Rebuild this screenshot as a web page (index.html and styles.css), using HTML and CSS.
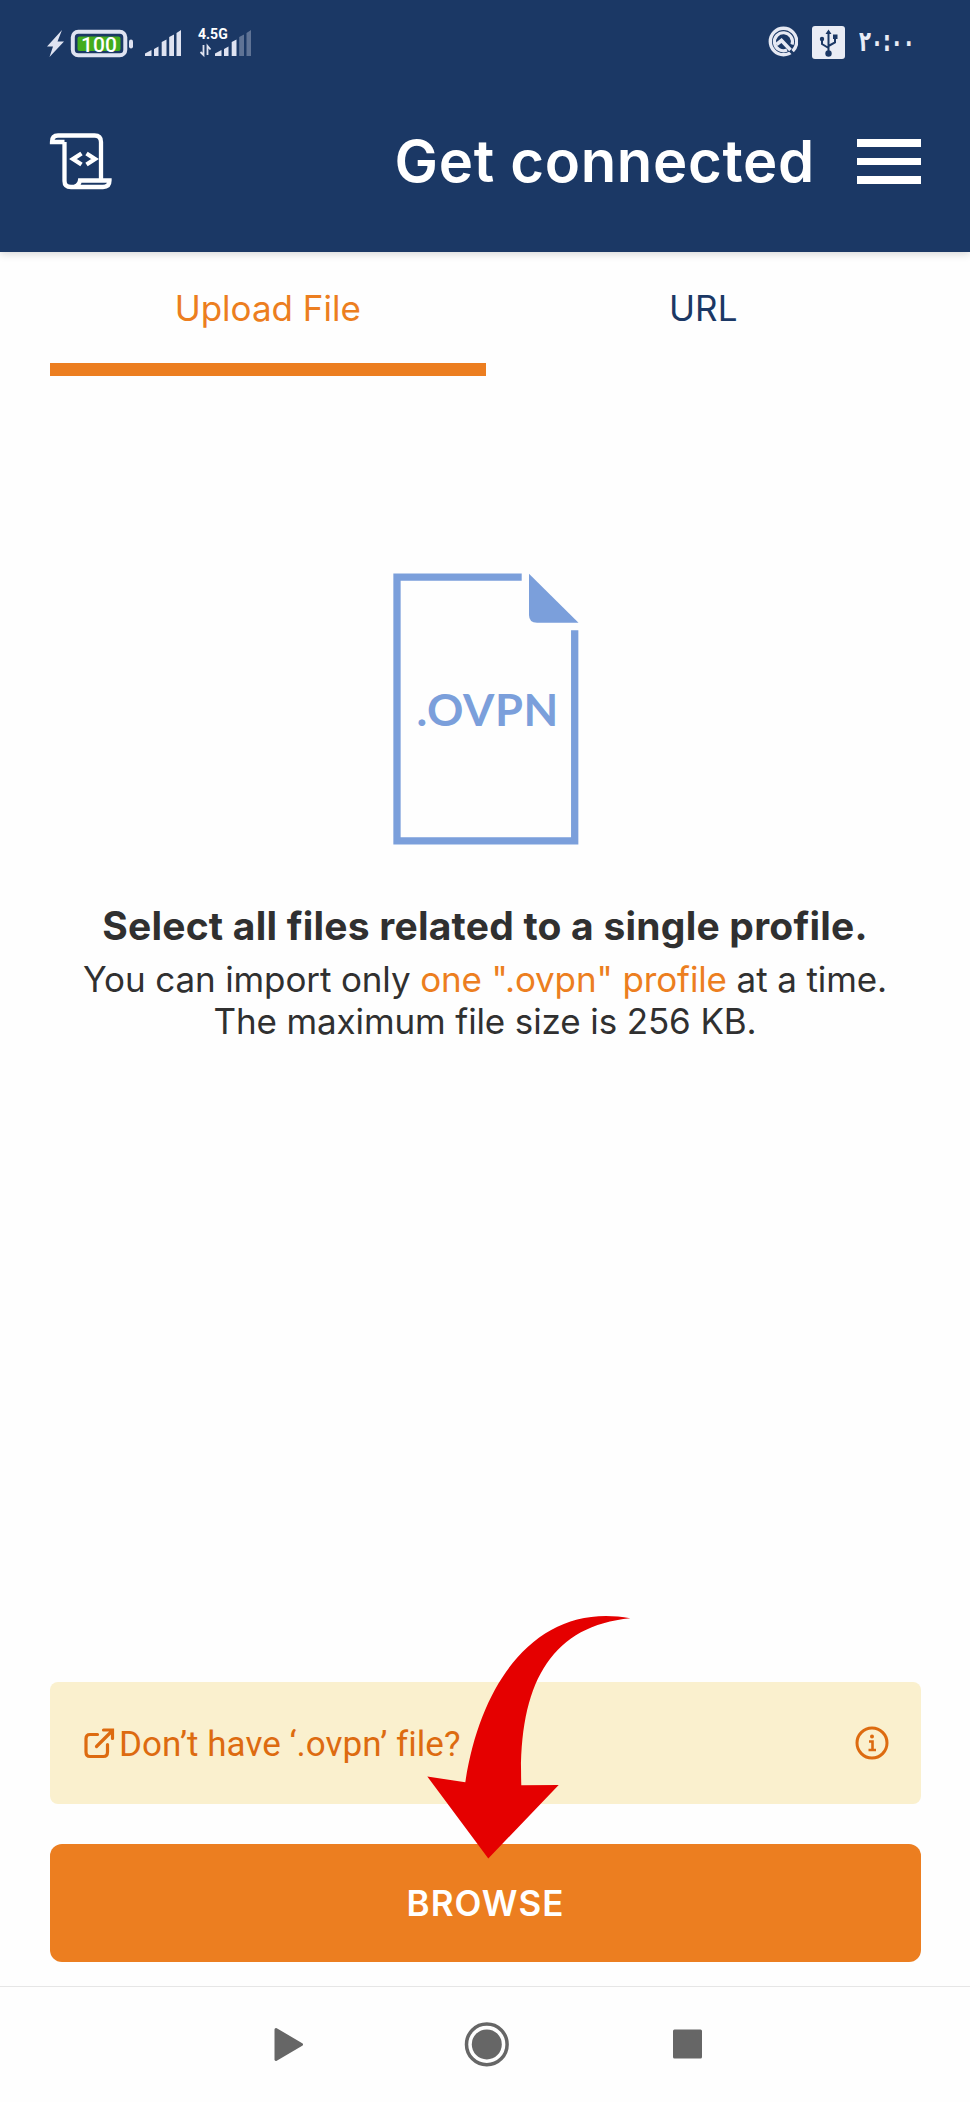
FILE: index.html
```html
<!DOCTYPE html>
<html lang="en">
<head>
<meta charset="utf-8">
<title>Get connected</title>
<link rel="stylesheet" href="styles.css">
</head>
<body>
<div class="screen">
  <header class="header">
    <div class="status">
      <svg class="status-left" width="210" height="40" viewBox="44 22 210 40">
        <path d="M62 30 47 46.500H53L49.500 57 64 41.500H57.500Z" fill="#dfe3f1"/>
        <rect x="72.800" y="31.800" width="52.500" height="23.500" rx="5.500" fill="none" stroke="#dfe3f1" stroke-width="4"/>
        <rect x="77.500" y="36.500" width="43" height="14.500" rx="2" fill="#43ac1c"/>
        <rect x="129" y="39.500" width="4" height="9" rx="2" fill="#dfe3f1"/>
        <text class="battery-text" x="99" y="51.500" text-anchor="middle">100</text>
        <g fill="#dfe3f1">
          <path d="M145 56V53.500L151.500 50V56ZM154 56V49L158.500 46.500V56ZM161.700 56V42L166.500 39.500V56ZM169.200 56V37L174 34.500V56ZM176.500 56V33L181 30V56Z"/>
          <path d="M215 56V53.500L221.500 50V56ZM224 56V49L228.500 46.500V56ZM231.700 56V42L236.500 39.500V56Z"/>
          <path d="M239.200 56V37L244 34.500V56ZM246.500 56V33L251 30V56Z" opacity=".35"/>
        </g>
        <path d="M203.500 45V55L200.500 52M207.500 55V46L210.500 49.500" fill="none" stroke="#dfe3f1" stroke-width="1.800"/>
        <text class="network-text" x="198" y="39">4.5G</text>
      </svg>
      <div class="status-right">
        <svg width="30" height="31" viewBox="768 27 30 31">
          <circle cx="783.500" cy="42.500" r="13.200" fill="none" stroke="#e6e9f3" stroke-width="3.400"/>
          <path d="M787 51A9 9 0 1 1 792 45.500" fill="none" stroke="#e6e9f3" stroke-width="3.200"/>
          <path d="M789 50.500 796 57.500" stroke="#1b3865" stroke-width="3"/>
          <path d="M776.500 45.500 781.500 41.500 790.500 51" fill="none" stroke="#e6e9f3" stroke-width="3.600"/>
        </svg>
        <svg width="33" height="34" viewBox="812 26 33 34">
          <rect x="812" y="26" width="33" height="33" rx="3" fill="#e9ecf5"/>
          <g fill="none" stroke="#1b3865" stroke-width="2"><path d="M828.500 52V32M828.500 48 822 44V39M828.500 46 835 42.500V37"/></g>
          <circle cx="828.500" cy="53.500" r="3.200" fill="#1b3865"/><circle cx="822" cy="39" r="2.200" fill="#1b3865"/>
          <path d="M828.500 29.500 825.500 34H831.500ZM833 34.500H837.500V39H833Z" fill="#1b3865"/>
        </svg>
        <span class="clock">۲۰:۰۰</span>
      </div>
    </div>
    <div class="appbar">
      <svg width="64" height="60" viewBox="48 131 64 60" fill="none" stroke="#fff" stroke-width="4.300">
        <path d="M64.500 142V181Q64.500 187 71 187H103Q109.500 187 109.500 180.500H80Q79 187 71 187M101 179V142Q101 135.500 94.500 135.500H58Q52 135.500 52 142H64.500"/>
        <path d="M81.500 153.500 73 159 81.500 164.500M86.500 153.500 95 159 86.500 164.500"/>
      </svg>
      <h1 class="title">Get connected</h1>
      <div class="menu"><i></i><i></i><i></i></div>
    </div>
  </header>
  <nav class="tabs">
    <div class="tab active">Upload File</div>
    <div class="tab">URL</div>
  </nav>
  <main class="content">
    <svg class="doc" width="186" height="272" viewBox="393 573 186 272">
      <path d="M521.700 577.200H397V840.800H574.700V630.300" fill="none" stroke="#7b9fdb" stroke-width="7.300"/>
      <path d="M529 573.800 578.500 622.700H537Q529 622.700 529 615Z" fill="#7b9fdb"/>
      <text class="ext" transform="translate(416.500 726) scale(1.050 1)">.OVPN</text>
    </svg>
    <p class="lead">Select all files related to a single profile.</p>
    <p class="body">You can import only <em>one ".ovpn" profile</em> at a time.<br>The maximum file size is 256 KB.</p>
  </main>
  <footer class="actions">
    <div class="notice">
      <svg width="32" height="32" viewBox="83 1727 32 32" fill="none" stroke="#dd6b10" stroke-width="3.200" stroke-linecap="round">
        <path d="M97.500 1734.500H90Q86 1734.500 86 1738.500V1752Q86 1756.500 90 1756.500H103.500Q107.500 1756.500 107.500 1752V1744.500M96.500 1746.500 112 1731M103.500 1730H112.500V1738.500"/>
      </svg>
      <span class="notice-text">Don’t have ‘.ovpn’ file?</span>
      <svg width="34" height="34" viewBox="0 0 34 34"><circle cx="17" cy="17" r="15" fill="none" stroke="#dd6b10" stroke-width="3"/><path d="M14 15.500H17.500V24M13.500 24H21" fill="none" stroke="#dd6b10" stroke-width="2.600"/><circle cx="17" cy="10.500" r="2" fill="#dd6b10"/></svg>
    </div>
    <div class="browse">BROWSE</div>
    <svg class="arrow" width="206" height="246" viewBox="426 1614 206 246"><path d="M488.300 1858.500 427.300 1776.500 465.300 1782.300C482 1673 543 1602 630.300 1618.300C550 1626 518 1685 521.300 1785.300L558.700 1785Z" fill="#e50000"/></svg>
  </footer>
  <div class="navbar">
    <svg width="430" height="46" viewBox="273 2021 430 46" fill="#666">
      <path d="M276 2029.500 301.500 2044.500 276 2059.500Z" stroke="#666" stroke-width="3" stroke-linejoin="round"/>
      <circle cx="486.800" cy="2044.400" r="20.300" fill="none" stroke="#666" stroke-width="3.500"/><circle cx="486.800" cy="2044.400" r="15"/>
      <rect x="673" y="2029.500" width="29" height="29" rx="1.500"/>
    </svg>
  </div>
</div>
</body>
</html>
```
FILE: styles.css
```css
* { box-sizing: border-box; }
body { margin: 0; background: #fefefe; font-family: Inter, "Liberation Sans", sans-serif; color: #303030; }
.screen { width: 970px; height: 2102px; display: flex; flex-direction: column; position: relative; }
.header { height: 252px; background: #1b3865; color: #fff; box-shadow: 0 2px 8px rgba(0, 0, 0, .16); flex: none; }
.status { height: 84px; padding: 22px 0 0 44px; display: flex; align-items: flex-start; }
.battery-text { font: 500 21px Roboto, sans-serif; fill: #fff; }
.network-text { font: 700 14px Roboto, sans-serif; fill: #fff; }
.status-right { display: flex; margin-left: 514px; padding-top: 4px; gap: 14px; }
.clock { font: 700 28px/31px "DejaVu Sans", sans-serif; color: #e9ecf5; transform: scaleX(.7); transform-origin: left; }
.appbar { display: flex; align-items: flex-start; padding: 47px 49px 0 48px; }
.title { margin: -1px 42px 0 auto; font-size: 58px; font-weight: 640; line-height: 62px; letter-spacing: .7px; }
.menu { width: 64px; display: flex; flex-direction: column; gap: 11px; padding-top: 8px; }
.menu i { height: 7.500px; background: #fff; }
.tabs { display: flex; height: 124px; padding: 0 49px 0 50px; flex: none; }
.tab { flex: 1; text-align: center; font-size: 35px; line-height: 42px; padding-top: 35px; color: #1b3865; }
.tab.active { color: #ec7e20; border-bottom: 13px solid #ec7e20; }
.content { display: flex; flex-direction: column; align-items: center; padding-top: 197px; text-align: center; }
.doc { margin-left: 2px; }
.ext { font: 700 43px Lato, sans-serif; letter-spacing: .6px; fill: #7b9fdb; }
.lead { margin: 56px 0 0; font-size: 39px; font-weight: 700; line-height: 50px; letter-spacing: .22px; white-space: nowrap; }
.body { margin: 7px 0 0; font-size: 35px; line-height: 42px; letter-spacing: -.12px; white-space: nowrap; }
.body em { font-style: normal; color: #ec7e20; }
.actions { margin-top: auto; padding: 0 49px 24px 50px; position: relative; }
.notice { height: 122px; margin-bottom: 40px; padding: 0 32px 0 33px; border-radius: 8px; background: #faf0ce; display: flex; align-items: center; color: #dd6b10; font: 35px Roboto, sans-serif; }
.notice-text { margin: 0 auto 0 4px; padding-top: 2px; letter-spacing: .04px; }
.browse { height: 118px; border-radius: 12px; background: #ec7e20; color: #fff; display: flex; align-items: center; justify-content: center; font-size: 35px; font-weight: 600; letter-spacing: 1px; }
.arrow { position: absolute; left: 426px; top: -68px; }
.navbar { height: 116px; flex: none; border-top: 1px solid #e6e6e6; padding: 34px 0 0 273px; }
```
